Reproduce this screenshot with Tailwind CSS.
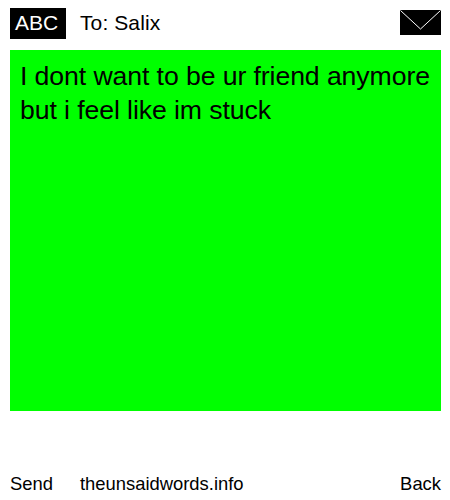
<!DOCTYPE html>
<html lang="en">
<head>
    <meta charset="UTF-8">
    <title>The Unsaid Words</title>
    <script src="https://cdn.jsdelivr.net/npm/@tailwindcss/browser@4"></script>
</head>
<body class="bg-white text-black font-['Liberation_Sans',Arial,sans-serif] w-[450px] h-[500px] overflow-hidden">
    <div class="flex flex-col h-full pl-[10px] pr-[9px]">
        <!-- Header -->
        <header class="flex items-start h-[50px] pt-[8px] pb-[11px]">
            <div class="w-[56px] h-[31px] bg-black text-white text-[21px] leading-[30px] pl-[5px]">ABC</div>
            <div class="ml-[14px] text-[21px] leading-[30px] tracking-[0.1px]">To: Salix</div>
            <svg class="ml-auto mt-[2px]" width="41" height="25" viewBox="0 0 41 25">
                <rect width="41" height="25" fill="#000"/>
                <path d="M0.5 0.5 L20.5 19 L40.5 0.5" fill="none" stroke="#fff" stroke-width="1"/>
            </svg>
        </header>
        <!-- Message -->
        <main class="h-[361px] bg-[#00ff00] pl-[10px] pr-0 py-[9px] text-[26.67px] leading-[34px] tracking-[-0.1px]">
            I dont want to be ur friend anymore but i feel like im stuck
        </main>
        <!-- Footer -->
        <footer class="flex items-center mt-[61px] text-[18.4px] leading-[24px]">
            <span>Send</span>
            <span class="ml-[27px]">theunsaidwords.info</span>
            <span class="ml-auto">Back</span>
        </footer>
    </div>
</body>
</html>
